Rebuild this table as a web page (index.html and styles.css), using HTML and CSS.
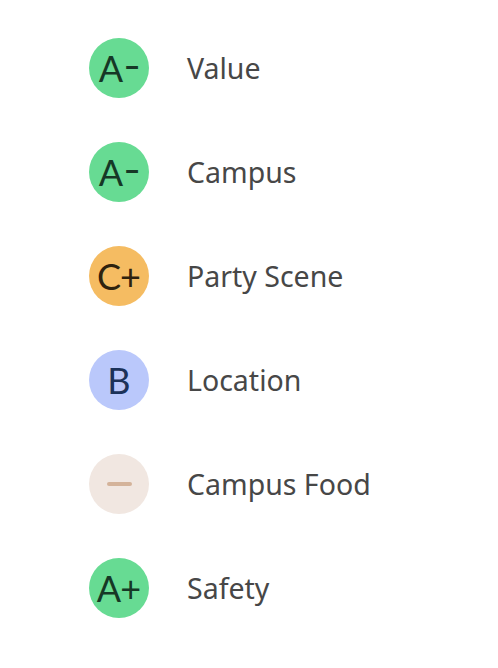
FILE: index.html
```html
<!DOCTYPE html>
<html lang="en">
<head>
<meta charset="utf-8">
<title>Grades</title>
<link rel="stylesheet" href="styles.css">
</head>
<body>
<ul class="grades">
  <li class="row"><span class="badge green">A<span class="sign minus">-</span></span><span class="label">Value</span></li>
  <li class="row"><span class="badge green">A<span class="sign minus">-</span></span><span class="label">Campus</span></li>
  <li class="row"><span class="badge orange">C<span class="sign">+</span></span><span class="label">Party Scene</span></li>
  <li class="row"><span class="badge blue">B</span><span class="label">Location</span></li>
  <li class="row"><span class="badge empty"><span class="bar"></span></span><span class="label">Campus Food</span></li>
  <li class="row"><span class="badge green">A<span class="sign">+</span></span><span class="label">Safety</span></li>
</ul>
</body>
</html>
```
FILE: styles.css
```css
html, body {
  margin: 0;
  padding: 0;
  background: #ffffff;
}
.grades {
  list-style: none;
  margin: 0;
  padding: 38px 0 0 89px;
  display: flex;
  flex-direction: column;
  gap: 44px;
}
.row {
  display: flex;
  align-items: center;
  gap: 38px;
  height: 60px;
}
.badge {
  width: 60px;
  height: 60px;
  border-radius: 50%;
  display: flex;
  align-items: center;
  justify-content: center;
  font-family: "Lato", sans-serif;
  font-size: 36px;
  font-weight: 400;
  line-height: 1;
  flex: none;
}
.sign {
  margin-left: -1px;
}
.minus {
  font-size: 38px;
  font-weight: 400;
  transform: translateY(-4px) scaleX(1.25);
  margin-left: 2px;
}
.green { background: #67db93; color: #163826; }
.orange { background: #f5bc62; color: #2e220e; }
.blue { background: #bac8fb; color: #1c3259; }
.empty { background: #f1e7e1; }
.bar {
  width: 25px;
  height: 4px;
  border-radius: 2px;
  background: #d4b39a;
}
.label {
  font-family: "Noto Sans", sans-serif;
  font-size: 28.5px;
  color: #474747;
  line-height: 1;
}
```
